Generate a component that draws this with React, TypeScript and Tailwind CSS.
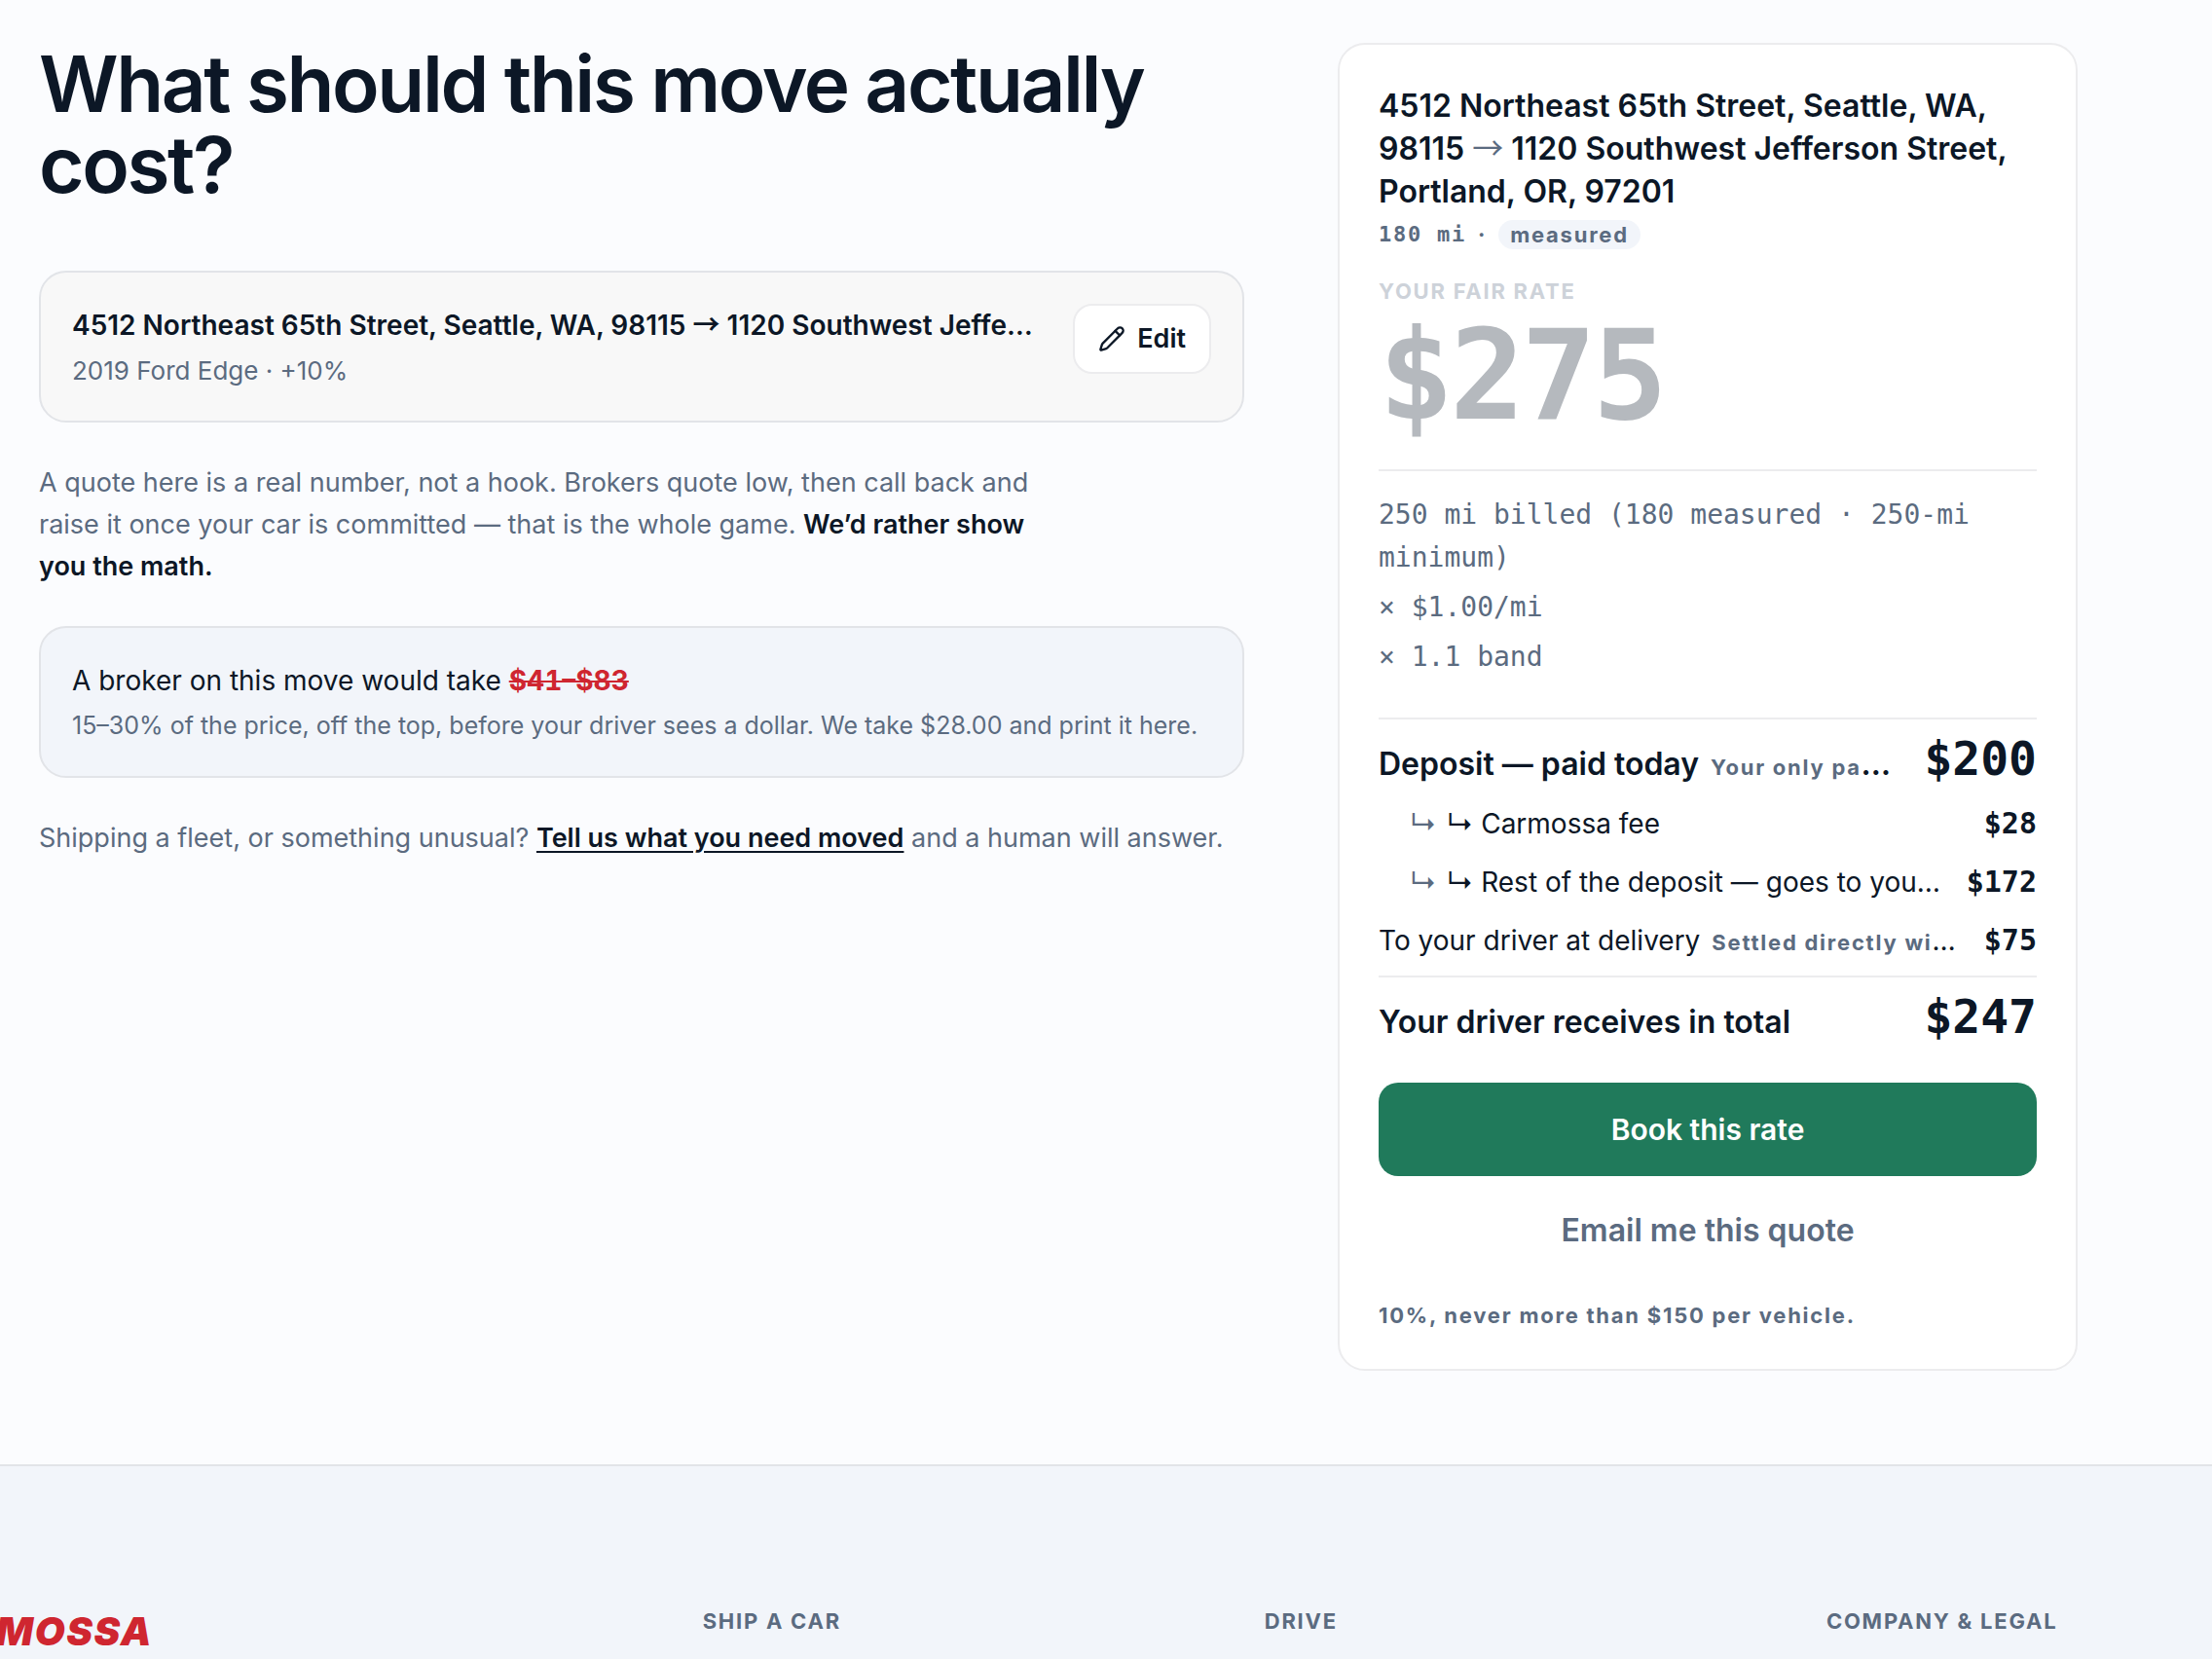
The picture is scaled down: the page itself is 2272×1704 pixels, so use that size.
import type { ReactNode } from 'react';

const mono = "font-['DejaVu_Sans_Mono',monospace]";

type RowProps = { label: ReactNode; amount: string; large?: boolean };

function Row({ label, amount, large = false }: RowProps) {
  return (
    <div className="flex items-baseline justify-between gap-[26px]">
      <dt className={large ? 'min-w-0 truncate text-[32px] font-semibold leading-10' : 'min-w-0 truncate text-[28px] leading-11'}>
        {label}
      </dt>
      <dd className={large ? `${mono} shrink-0 text-[48px] font-bold leading-11` : `${mono} shrink-0 text-[30px] font-bold leading-9`}>{amount}</dd>
    </div>
  );
}

function Note({ children }: { children: ReactNode }) {
  return <span className="ml-3 text-[22px] font-bold tracking-[0.08em] text-[#5b6b80]">{children}</span>;
}

function Elbow() {
  return <span className="mr-2.5 ml-8 text-[#5b6b80]">↳</span>;
}

function Arrow({ className = '' }: { className?: string }) {
  return <span className={`font-['Noto_Sans_CJK_SC',sans-serif] leading-none ${className}`}>→</span>;
}

function Pencil() {
  return (
    <svg className="size-7" viewBox="0 0 24 24" fill="none" stroke="currentColor" strokeWidth="2" strokeLinecap="round" strokeLinejoin="round" aria-hidden="true">
      <path d="M21.174 6.812a1 1 0 0 0-3.986-3.987L3.842 16.174a2 2 0 0 0-.5.83l-1.321 4.352a.5.5 0 0 0 .623.622l4.353-1.32a2 2 0 0 0 .83-.497z" />
      <path d="m15 5 4 4" />
    </svg>
  );
}

function QuoteCard() {
  return (
    <aside className="rounded-[28px] border-2 border-[#ececee] bg-white px-10 pt-[41px] pb-10">
      <h2 className="text-[32px] font-semibold leading-11">
        4512 Northeast 65th Street, Seattle, WA, 98115 <Arrow className="font-normal text-[#5b6b80]" /> 1120 Southwest Jefferson Street, Portland, OR, 97201
      </h2>
      <p className="mt-[7px] flex items-center gap-3 text-[22px] font-bold leading-[30px] tracking-[0.08em] text-[#5b6b80]">
        <span className={mono}>180 mi</span>
        <span>·</span>
        <span className="rounded-full bg-[#f2f5fa] px-3">measured</span>
      </p>
      <p className="mt-7 text-[22px] font-bold uppercase leading-[30px] tracking-[0.08em] text-[#cdd2d9]">Your fair rate</p>
      <p className={`${mono} mt-2 text-[128px] font-bold leading-none tracking-[-0.03em] text-[#b5b9be]`}>$275</p>
      <ul className={`${mono} mt-8 space-y-[7px] border-t-2 border-[#ececee] pt-[23px] pb-10 text-[28px] leading-11 text-[#5b6b80]`}>
        <li>250 mi billed (180 measured · 250-mi minimum)</li>
        <li>× $1.00/mi</li>
        <li>× 1.1 band</li>
      </ul>
      <dl className="space-y-4 border-y-2 border-[#ececee] pt-[18px] pb-3">
        <Row large label={<>Deposit — paid today<Note>Your only payment to us</Note></>} amount="$200" />
        <Row label={<><Elbow />↳ Carmossa fee</>} amount="$28" />
        <Row label={<><Elbow />↳ Rest of the deposit — goes to your driver</>} amount="$172" />
        <Row label={<>To your driver at delivery<Note>Settled directly with them</Note></>} amount="$75" />
      </dl>
      <dl className="pt-[18px]">
        <Row large label="Your driver receives in total" amount="$247" />
      </dl>
      <button type="button" className="mt-[42px] h-24 w-full rounded-[20px] bg-[#207a5b] text-[30px] font-semibold text-white">Book this rate</button>
      <button type="button" className="mt-2 h-24 w-full rounded-[20px] text-[32px] font-semibold text-[#5b6b80]">Email me this quote</button>
      <p className="mt-6 text-[22px] font-bold leading-[30px] tracking-[0.08em] text-[#5b6b80]">10%, never more than $150 per vehicle.</p>
    </aside>
  );
}

export default function App() {
  return (
    <div className="min-h-screen overflow-x-hidden bg-[#fbfcfe] font-['Inter',sans-serif] text-[#0c1726]">
      <main className="grid grid-cols-[minmax(0,1fr)_760px] items-start gap-24 pt-11 pr-[138px] pb-24 pl-10">
        <section className="flex flex-col gap-10">
          <h1 className="mb-7 text-[80px] font-semibold leading-[83px] tracking-[-0.03em]">What should this move actually cost?</h1>
          <div className="flex items-start justify-between gap-10 rounded-[28px] border-2 border-[#e2e4e8] bg-[#f8f8f8] p-8">
            <div className="min-w-0">
              <p className="truncate text-[28px] font-semibold leading-11">4512 Northeast 65th Street, Seattle, WA, 98115 <Arrow /> 1120 Southwest Jefferson Street, Portland, OR, 97201</p>
              <p className="mt-1.5 text-[26px] leading-[38px] text-[#5b6b80]">2019 Ford Edge · +10%</p>
            </div>
            <button type="button" className="flex h-[72px] shrink-0 items-center gap-3 rounded-[20px] border-2 border-[#ececee] bg-white px-6 text-[27px] font-semibold">
              <Pencil />
              Edit
            </button>
          </div>
          <p className="max-w-[1040px] text-[27px] leading-[43px] text-[#5b6b80]">
            A quote here is a real number, not a hook. Brokers quote low, then call back and raise it once your car is committed — that is the whole game.{' '}
            <strong className="font-semibold text-[#0c1726]">We’d rather show you the math.</strong>
          </p>
          <div className="rounded-[28px] border-2 border-[#e2e4e8] bg-[#f2f5fa] p-8">
            <p className="text-[28px] leading-11">
              A broker on this move would take <s className="font-bold tabular-nums text-[#cf2630]">$41–$83</s>
            </p>
            <p className="mt-1 text-[25px] leading-10 text-[#5b6b80]">15–30% of the price, off the top, before your driver sees a dollar. We take $28.00 and print it here.</p>
          </div>
          <p className="text-[27px] leading-[43px] text-[#5b6b80]">
            Shipping a fleet, or something unusual?{' '}
            <a href="#contact" className="font-semibold text-[#0c1726] underline underline-offset-4">Tell us what you need moved</a> and a human will answer.
          </p>
        </section>
        <QuoteCard />
      </main>
      <footer className="border-t-2 border-[#e2e4e8] bg-[#f2f5fa] pt-36 pb-16">
        <div className="-mr-[85px] -ml-24 grid grid-cols-[1.5fr_1fr_1fr_1fr] gap-24">
          <p className="text-[40px] font-black italic leading-[52px] tracking-[0.04em] text-[#cf2630]">CARMOSSA</p>
          <h3 className="text-[22px] font-bold uppercase leading-[30px] tracking-[0.08em] text-[#5b6b80]">Ship a car</h3>
          <h3 className="text-[22px] font-bold uppercase leading-[30px] tracking-[0.08em] text-[#5b6b80]">Drive</h3>
          <h3 className="text-[22px] font-bold uppercase leading-[30px] tracking-[0.08em] text-[#5b6b80]">Company &amp; legal</h3>
        </div>
      </footer>
    </div>
  );
}
